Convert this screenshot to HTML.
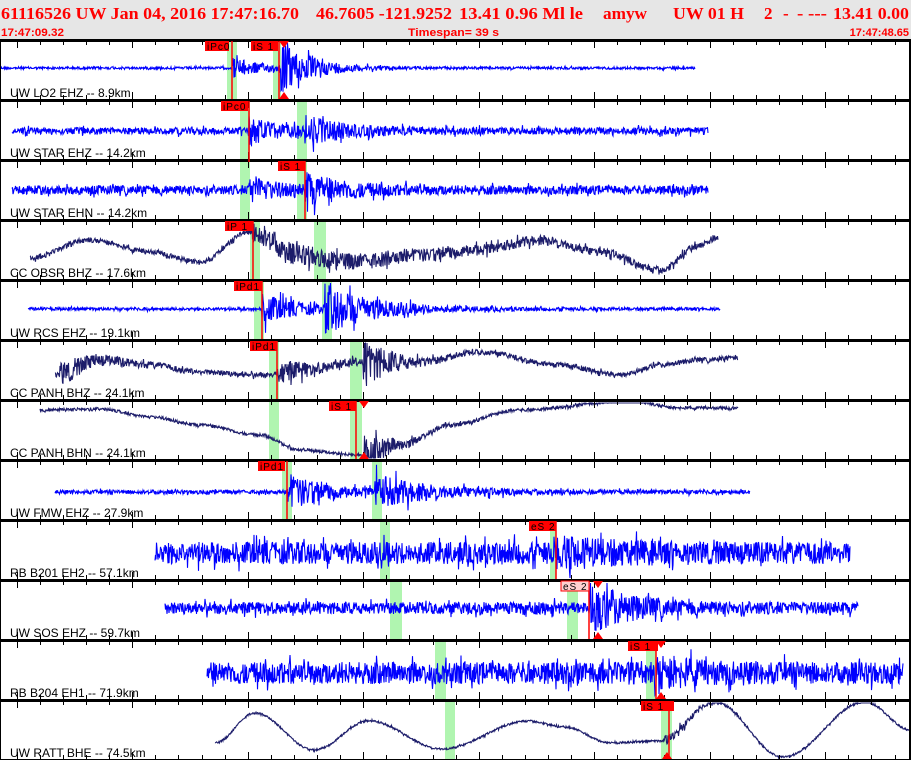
<!DOCTYPE html>
<html><head><meta charset="utf-8"><style>
html,body{margin:0;padding:0;background:#fff;width:911px;height:760px;overflow:hidden}
svg{display:block}
</style></head><body>
<svg id="s" width="911" height="760" xmlns="http://www.w3.org/2000/svg">
<rect x="0" y="0" width="911" height="40" fill="#e6e6e6"/>
<g fill="#f00" font-family="Liberation Serif, serif" font-weight="bold" font-size="17">
<text x="1" y="19" textLength="298" lengthAdjust="spacingAndGlyphs">61116526 UW Jan 04, 2016 17:47:16.70</text>
<text x="316" y="19" textLength="136" lengthAdjust="spacingAndGlyphs">46.7605 -121.9252</text>
<text x="459" y="19" textLength="124" lengthAdjust="spacingAndGlyphs">13.41 0.96 Ml le</text>
<text x="603" y="19" textLength="44" lengthAdjust="spacingAndGlyphs">amyw</text>
<text x="673" y="19" textLength="71" lengthAdjust="spacingAndGlyphs">UW 01 H</text>
<text x="764" y="19">2</text>
<text x="783" y="19">-</text>
<text x="797" y="19" textLength="30" lengthAdjust="spacingAndGlyphs">- ---</text>
<text x="833" y="19" textLength="76" lengthAdjust="spacingAndGlyphs">13.41 0.00</text>
</g>
<g fill="#f00" font-family="Liberation Sans, sans-serif" font-weight="bold" font-size="11">
<text x="1" y="36" textLength="63" lengthAdjust="spacingAndGlyphs">17:47:09.32</text>
<text x="408" y="36" textLength="91" lengthAdjust="spacingAndGlyphs">Timespan=  39 s</text>
<text x="909" y="36" text-anchor="end">17:47:48.65</text>
</g>
<g id="bands"></g>
<g id="waves"></g>
<g id="frame"></g>
<g id="picks"></g>
<g font-family="Liberation Sans, sans-serif" font-size="12" fill="#000">
<text x="10" y="97">UW LO2 EHZ -- 8.9km</text>
<text x="10" y="157">UW STAR EHZ -- 14.2km</text>
<text x="10" y="217">UW STAR EHN -- 14.2km</text>
<text x="10" y="277">CC OBSR BHZ -- 17.6km</text>
<text x="10" y="337">UW RCS EHZ -- 19.1km</text>
<text x="10" y="397">CC PANH BHZ -- 24.1km</text>
<text x="10" y="457">CC PANH BHN -- 24.1km</text>
<text x="10" y="517">UW FMW EHZ -- 27.9km</text>
<text x="10" y="577">RB B201 EH2 -- 57.1km</text>
<text x="10" y="637">UW SOS EHZ -- 59.7km</text>
<text x="10" y="697">RB B204 EH1 -- 71.9km</text>
<text x="10" y="757">UW RATT BHE -- 74.5km</text>
</g>
</svg>
<script>
(function(){
var NS="http://www.w3.org/2000/svg";
function el(p,t,a){var e=document.createElementNS(NS,t);for(var k in a)e.setAttribute(k,a[k]);document.getElementById(p).appendChild(e);return e;}
var seed=12345;function rnd(){seed=(seed*1103515245+12345)%2147483648;return seed/2147483648;}
var B="#0000ff",N="#1c1c6a";
var P=[
{t:40,x0:0,x1:695,c:B,y:68,n:1.2,ev:[[232,10,30],[281,24,30]],b:[[227,10],[273,8]],pk:[{bx:205,bw:24,l:"iPc0",lx:232},{bx:251,bw:27,l:"iS 1",lx:279,tri:284}]},
{t:100,x0:12,x1:708,c:B,y:131,n:3.5,ev:[[249,14,25],[305,12,40]],b:[[240,10],[297,10]],pk:[{bx:221,bw:27,l:"iPc0",lx:249,le:162}]},
{t:160,x0:12,x1:708,c:B,y:190,n:4.5,ev:[[249,12,25],[305,14,40]],b:[[240,10],[297,10]],pk:[{bx:278,bw:27,l:"iS 1",lx:305}]},
{t:220,x0:30,x1:718,c:N,y:250,n:2.5,ev:[[252,10,200]],k:[[30,258],[90,240],[150,252],[200,262],[250,232],[300,255],[350,262],[420,255],[480,250],[540,240],[600,252],[660,270],[700,245],[718,237]],b:[[250,10],[314,12]],pk:[{bx:225,bw:28,l:"iP 1",lx:253}]},
{t:280,x0:28,x1:720,c:B,y:309,n:1.5,ev:[[262,14,40],[325,22,50]],b:[[254,10],[322,10]],pk:[{bx:234,bw:28,l:"iPd1",lx:262}]},
{t:340,x0:55,x1:738,c:N,y:368,n:2.5,ev:[[60,10,40],[278,10,40],[363,25,25]],k:[[55,375],[100,360],[150,365],[200,372],[260,375],[300,370],[360,362],[420,362],[480,352],[560,365],[620,375],[660,365],[700,360],[738,358]],b:[[269,10],[350,12]],pk:[{bx:250,bw:27,l:"iPd1",lx:277}]},
{t:400,x0:40,x1:738,c:N,y:430,n:1.5,ev:[[364,20,25]],k:[[40,410],[100,409],[150,417],[200,425],[260,435],[300,450],[360,455],[400,445],[450,425],[520,410],[630,401],[680,408],[738,408]],b:[[269,10],[350,12]],pk:[{bx:329,bw:27,l:"iS 1",lx:356,tri:364}]},
{t:460,x0:55,x1:750,c:B,y:492,n:2,ev:[[287,18,40],[375,14,60]],b:[[282,10],[372,10]],pk:[{bx:258,bw:27,l:"iPd1",lx:287}]},
{t:520,x0:155,x1:850,c:B,y:553,n:11,ev:[[556,8,60]],b:[[380,10],[550,6]],pk:[{bx:529,bw:27,l:"eS 2",lx:556}]},
{t:580,x0:165,x1:858,c:B,y:608,n:6,ev:[[590,22,40]],b:[[390,12],[567,11]],pk:[{bx:561,bw:28,l:"eS 2",lx:589,pink:1,tri:598}]},
{t:640,x0:207,x1:903,c:B,y:673,n:11,ev:[[655,12,30]],b:[[435,11],[646,10]],pk:[{bx:628,bw:30,l:"iS 1",lx:656,tri:661}]},
{t:700,x0:215,x1:911,c:N,y:730,n:1,ev:[[665,5,30]],k:[[215,743],[255,713],[314,750],[369,721],[442,749],[528,721],[565,727],[610,743],[660,741],[715,702],[783,757],[865,702],[911,730]],b:[[445,10],[661,11]],pk:[{bx:641,bw:33,l:"iS 1",lx:669,tri:667}]}
];
function kp(k,x){for(var i=0;i<k.length-1;i++){if(x<=k[i+1][0]){var a=k[i],b=k[i+1],t=(x-a[0])/(b[0]-a[0]);t=(1-Math.cos(t*Math.PI))/2;return a[1]+(b[1]-a[1])*t;}}return k[k.length-1][1];}
P.forEach(function(p){
 p.b.forEach(function(b){el("bands","rect",{x:b[0],y:p.t+1,width:b[1],height:59,fill:"#b0f5b0"});});
 var pts=[];
 for(var x=p.x0;x<=p.x1;x+=0.5){
  var base=p.k?kp(p.k,x):p.y;
  var a=p.n;
  p.ev.forEach(function(e){if(x>=e[0]){a+=e[1]*Math.exp(-(x-e[0])/e[2]);}});
  var r=(rnd()*2-1);if(rnd()<0.08)r*=1.7;
  var y=base+r*a;y=Math.max(p.t+3,Math.min(p.t+58,y));
  pts.push(x.toFixed(1)+","+y.toFixed(1));
 }
 el("waves","polyline",{points:pts.join(" "),fill:"none",stroke:p.c,"stroke-width":1.1});
 p.pk.forEach(function(k){
  el("picks","line",{x1:k.lx,y1:p.t+1,x2:k.lx,y2:k.le||p.t+59,stroke:"#f00","stroke-width":1.5});
  el("picks","rect",{x:k.bx,y:p.t+1,width:k.bw,height:10,fill:k.pink?"#ffd0d0":"#f00",stroke:k.pink?"#f00":"none","stroke-width":1});
  var tx=el("picks","text",{x:k.bx+2,y:p.t+10,"font-family":"Liberation Sans, sans-serif","font-size":10,fill:"#000","letter-spacing":"1"});tx.textContent=k.l;
  if(k.tri){
   el("picks","polygon",{points:(k.tri-5)+","+(p.t+1)+" "+(k.tri+5)+","+(p.t+1)+" "+k.tri+","+(p.t+8),fill:"#f00"});
   el("picks","polygon",{points:(k.tri-5)+","+(p.t+59)+" "+(k.tri+5)+","+(p.t+59)+" "+k.tri+","+(p.t+52),fill:"#f00"});
  }
 });
});
for(var j=0;j<=12;j++){
 var y=40+60*j;
 el("frame","rect",{x:0,y:y-1,width:911,height:3,fill:"#000"});
 for(var i=0;i<40;i++){
  var x=Math.round(16.7+23.1*i);if(x>911)break;
  var L=(i%5==0)?7:4;
  if(j<12)el("frame","rect",{x:x,y:y+1,width:1,height:L,fill:"#000"});
  if(j>0)el("frame","rect",{x:x,y:y-1-L,width:1,height:L,fill:"#000"});
 }
}
el("frame","rect",{x:0,y:40,width:1,height:720,fill:"#000"});
el("frame","rect",{x:909,y:40,width:2,height:720,fill:"#000"});
})();
</script>
</body></html>
